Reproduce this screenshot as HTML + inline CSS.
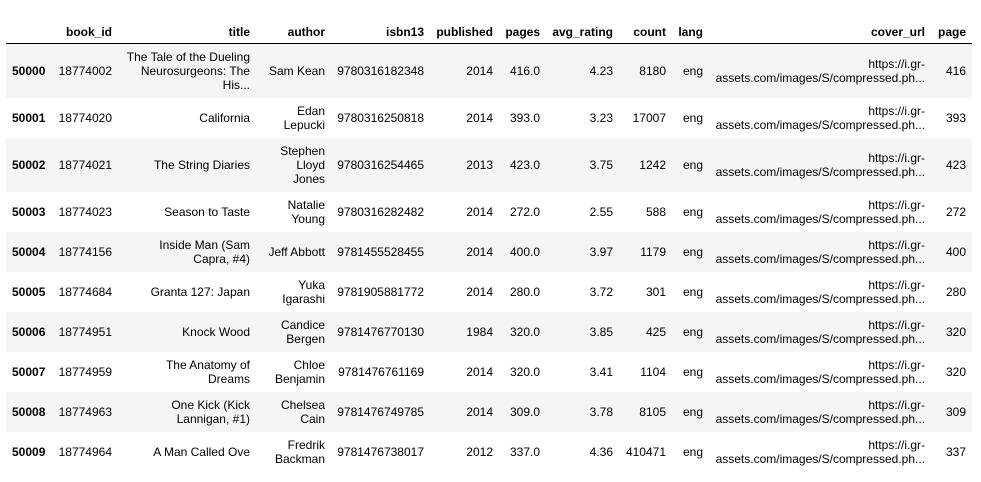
<!DOCTYPE html>
<html><head><meta charset="utf-8"><style>
body{margin:0;background:#fff;font-family:"Liberation Sans",Arial,sans-serif;font-size:12px;color:#000}
table{position:absolute;left:6px;top:20px;border-collapse:collapse;table-layout:fixed;width:966px}
th,td{padding:0 6px;text-align:right;vertical-align:middle;line-height:14px;overflow:hidden}
thead th{height:23px;border-bottom:1px solid #000;font-weight:bold;vertical-align:middle}
tbody tr:nth-child(odd){background:#f5f5f5}
tbody th{font-weight:bold;text-align:left}
tbody tr{height:40px}
tbody tr.t{height:54px}
</style></head><body>
<table>
<colgroup><col style="width:46px"><col style="width:66px"><col style="width:138px"><col style="width:75px"><col style="width:99px"><col style="width:69px"><col style="width:47px"><col style="width:73px"><col style="width:53px"><col style="width:37px"><col style="width:222px"><col style="width:41px"></colgroup>
<thead><tr><th></th><th>book_id</th><th>title</th><th>author</th><th>isbn13</th><th>published</th><th>pages</th><th>avg_rating</th><th>count</th><th>lang</th><th>cover_url</th><th>page</th></tr></thead>
<tbody>
<tr class="t"><th>50000</th><td>18774002</td><td>The Tale of the Dueling Neurosurgeons: The His...</td><td>Sam Kean</td><td>9780316182348</td><td>2014</td><td>416.0</td><td>4.23</td><td>8180</td><td>eng</td><td>https://i.gr-assets.com/images/S/compressed.ph...</td><td>416</td></tr>
<tr><th>50001</th><td>18774020</td><td>California</td><td>Edan Lepucki</td><td>9780316250818</td><td>2014</td><td>393.0</td><td>3.23</td><td>17007</td><td>eng</td><td>https://i.gr-assets.com/images/S/compressed.ph...</td><td>393</td></tr>
<tr class="t"><th>50002</th><td>18774021</td><td>The String Diaries</td><td>Stephen Lloyd Jones</td><td>9780316254465</td><td>2013</td><td>423.0</td><td>3.75</td><td>1242</td><td>eng</td><td>https://i.gr-assets.com/images/S/compressed.ph...</td><td>423</td></tr>
<tr><th>50003</th><td>18774023</td><td>Season to Taste</td><td>Natalie Young</td><td>9780316282482</td><td>2014</td><td>272.0</td><td>2.55</td><td>588</td><td>eng</td><td>https://i.gr-assets.com/images/S/compressed.ph...</td><td>272</td></tr>
<tr><th>50004</th><td>18774156</td><td>Inside Man (Sam Capra, #4)</td><td>Jeff Abbott</td><td>9781455528455</td><td>2014</td><td>400.0</td><td>3.97</td><td>1179</td><td>eng</td><td>https://i.gr-assets.com/images/S/compressed.ph...</td><td>400</td></tr>
<tr><th>50005</th><td>18774684</td><td>Granta 127: Japan</td><td>Yuka Igarashi</td><td>9781905881772</td><td>2014</td><td>280.0</td><td>3.72</td><td>301</td><td>eng</td><td>https://i.gr-assets.com/images/S/compressed.ph...</td><td>280</td></tr>
<tr><th>50006</th><td>18774951</td><td>Knock Wood</td><td>Candice Bergen</td><td>9781476770130</td><td>1984</td><td>320.0</td><td>3.85</td><td>425</td><td>eng</td><td>https://i.gr-assets.com/images/S/compressed.ph...</td><td>320</td></tr>
<tr><th>50007</th><td>18774959</td><td>The Anatomy of Dreams</td><td>Chloe Benjamin</td><td>9781476761169</td><td>2014</td><td>320.0</td><td>3.41</td><td>1104</td><td>eng</td><td>https://i.gr-assets.com/images/S/compressed.ph...</td><td>320</td></tr>
<tr><th>50008</th><td>18774963</td><td>One Kick (Kick Lannigan, #1)</td><td>Chelsea Cain</td><td>9781476749785</td><td>2014</td><td>309.0</td><td>3.78</td><td>8105</td><td>eng</td><td>https://i.gr-assets.com/images/S/compressed.ph...</td><td>309</td></tr>
<tr><th>50009</th><td>18774964</td><td>A Man Called Ove</td><td>Fredrik Backman</td><td>9781476738017</td><td>2012</td><td>337.0</td><td>4.36</td><td>410471</td><td>eng</td><td>https://i.gr-assets.com/images/S/compressed.ph...</td><td>337</td></tr>
</tbody></table>
</body></html>
